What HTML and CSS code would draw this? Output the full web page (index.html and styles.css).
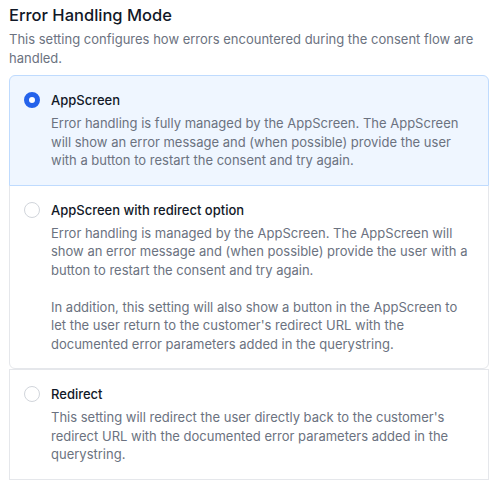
FILE: index.html
```html
<!DOCTYPE html>
<html lang="en">
<head>
<meta charset="utf-8">
<title>Error Handling Mode</title>
<link rel="stylesheet" href="styles.css">
</head>
<body>
<main class="setting">
  <h2 class="setting-title">Error Handling Mode</h2>
  <p class="setting-desc">This setting configures how errors encountered during the consent flow are handled.</p>
  <div class="options" role="radiogroup">
    <label class="option option-first option-checked">
      <span class="radio radio-checked"></span>
      <span class="option-body">
        <span class="option-title">AppScreen</span>
        <span class="option-desc">Error handling is fully managed by the AppScreen. The AppScreen will show an error message and (when possible) provide the user with a button to restart the consent and try again.</span>
      </span>
    </label>
    <label class="option option-middle">
      <span class="radio"></span>
      <span class="option-body">
        <span class="option-title">AppScreen with redirect option</span>
        <span class="option-desc">Error handling is managed by the AppScreen. The AppScreen will show an error message and (when possible) provide the user with a button to restart the consent and try again.<br><br>In addition, this setting will also show a button in the AppScreen to let the user return to the customer's redirect URL with the documented error parameters added in the querystring.</span>
      </span>
    </label>
    <label class="option option-last">
      <span class="radio"></span>
      <span class="option-body">
        <span class="option-title">Redirect</span>
        <span class="option-desc">This setting will redirect the user directly back to the customer's redirect URL with the documented error parameters added in the querystring.</span>
      </span>
    </label>
  </div>
</main>
</body>
</html>
```
FILE: styles.css
```css
* { box-sizing: border-box; }
html, body { margin: 0; padding: 0; background: #ffffff; }
body {
  font-family: Inter, "Noto Sans", "Liberation Sans", sans-serif;
  color: #111827;
}
.setting {
  padding: 3px 7px 0 9px;
}
.setting-title {
  margin: 0;
  font-size: 16.5px;
  line-height: 24px;
  font-weight: 500;
  color: #111827;
}
.setting-desc {
  margin: 3px 0 0;
  font-size: 13px;
  line-height: 18.5px;
  color: #6b7280;
}
.options {
  margin-top: 8px;
  display: flex;
  flex-direction: column;
}
.option {
  display: flex;
  gap: 11px;
  padding: 14px 16px 15px 14px;
  border: 1px solid #e5e7eb;
  background: #ffffff;
  position: relative;
}
.option-first {
  border-radius: 6px 6px 0 0;
}
.option-middle {
  margin-top: -1px;
  border-radius: 0 0 6px 6px;
}
.option-checked {
  background: #eff6ff;
  border-color: #bfdbfe;
  z-index: 1;
}
.radio {
  flex: none;
  width: 16px;
  height: 16px;
  margin-top: 2px;
  border-radius: 50%;
  border: 1px solid #d1d5db;
  background: #ffffff;
}
.radio-checked {
  border: 5px solid #2563eb;
  background: #ffffff;
}
.option-body {
  display: flex;
  flex-direction: column;
  gap: 4px;
}
.option-title {
  font-size: 13px;
  line-height: 20px;
  font-weight: 500;
  color: #111827;
}
.option-desc {
  font-size: 13px;
  line-height: 18.5px;
  color: #6b7280;
}
```
